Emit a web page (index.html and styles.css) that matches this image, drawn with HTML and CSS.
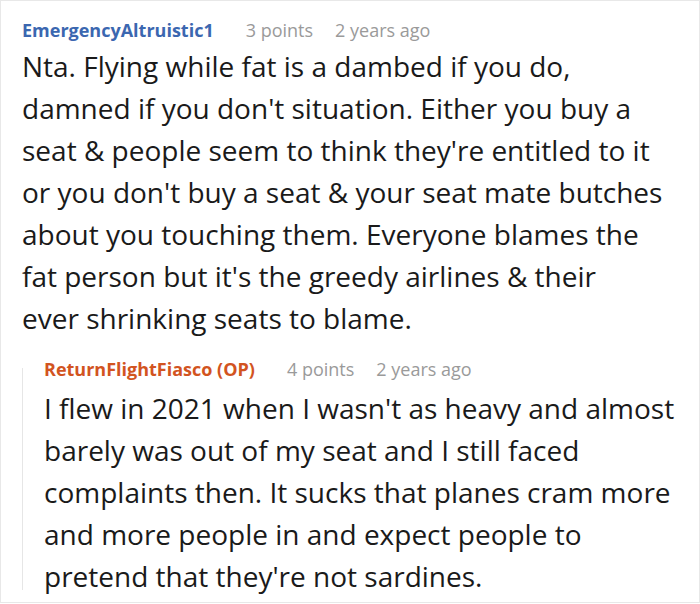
FILE: index.html
```html
<!DOCTYPE html>
<html>
<head>
<meta charset="utf-8">
<link rel="stylesheet" href="styles.css">
</head>
<body>
<div class="thread">
  <div class="comment">
    <div class="meta">
      <span class="user">EmergencyAltruistic1</span>
      <span class="info">3 points</span>
      <span class="info">2 years ago</span>
    </div>
    <p class="text">Nta. Flying while fat is a dambed if you do, damned if you don't situation. Either you buy a seat &amp; people seem to think they're entitled to it or you don't buy a seat &amp; your seat mate butches about you touching them. Everyone blames the fat person but it's the greedy airlines &amp; their<br>ever shrinking seats to blame.</p>
    <div class="reply">
      <div class="rule"></div>
      <div class="reply-body">
        <div class="meta">
          <span class="user op">ReturnFlightFiasco (OP)</span>
          <span class="info">4 points</span>
          <span class="info">2 years ago</span>
        </div>
        <p class="text">I flew in 2021 when I wasn't as heavy and almost barely was out of my seat and I still faced complaints then. It sucks that planes cram more and more people in and expect people to pretend that they're not sardines.</p>
      </div>
    </div>
  </div>
</div>
</body>
</html>
```

FILE: styles.css
```css
html, body {
  margin: 0;
  padding: 0;
  background: #fff;
}
.thread {
  width: 700px;
  height: 603px;
  box-sizing: border-box;
  border: 1px solid #e8e8e8;
  padding: 17px 22px 0 21px;
  font-family: "Open Sans", "Noto Sans", sans-serif;
  color: #1a1a1a;
  overflow: hidden;
}
.meta {
  display: flex;
  align-items: center;
  height: 24px;
  font-size: 18px;
  line-height: 24px;
}
.user {
  font-weight: 700;
  color: #3b67b0;
  margin-right: 32px;
}
.user.op {
  color: #d2541f;
}
.info {
  color: #9a9a9a;
  margin-right: 22px;
}
.text {
  margin: 3px 0 0 0;
  font-size: 28px;
  line-height: 42px;
}
.reply {
  display: flex;
  margin-top: 18px;
}
.rule {
  flex: 0 0 1px;
  background: #e6e6e6;
  margin: 11px 0 7px 0;
}
.reply-body {
  flex: 1;
  padding-left: 21px;
}
.reply-body .text {
  margin-top: 6px;
}
```
